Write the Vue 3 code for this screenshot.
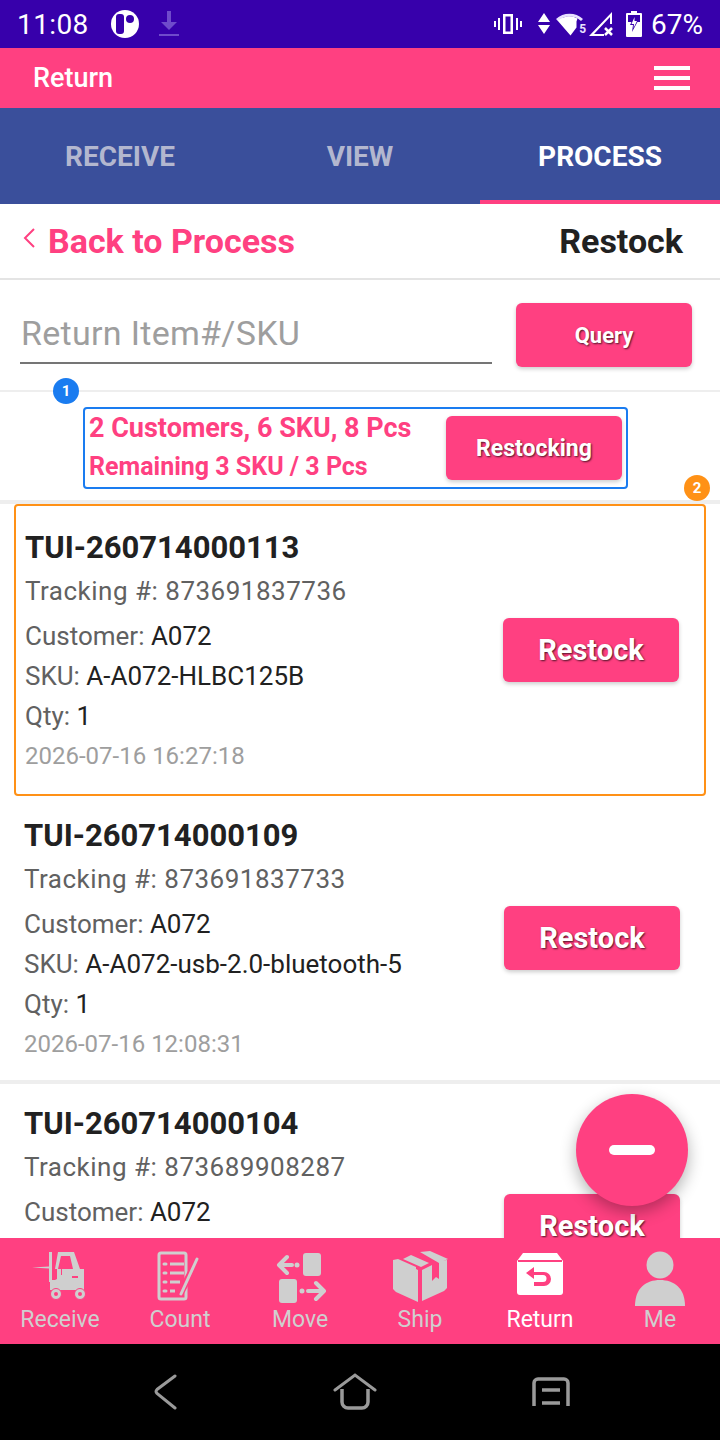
<template>
  <div class="phone">
    <div class="status-bar">
      <span class="time">11:08</span>
      <svg class="st-icon" width="30" height="30" viewBox="0 0 30 30">
        <circle cx="15" cy="15" r="14" fill="#fff" />
        <rect x="6" y="5" width="8" height="20" rx="3" fill="#3700ab" />
        <circle cx="20" cy="10" r="4" fill="#3700ab" />
      </svg>
      <svg class="st-icon dl" width="22" height="28" viewBox="0 0 22 28">
        <path d="M9 1h4v11h6l-8 8-8-8h6zM1 24h20v2H1z" fill="#6f4bcb" />
      </svg>
      <span class="spacer"></span>
      <svg width="28" height="22" viewBox="0 0 28 22">
        <path d="M9 1h10v20H9zM11.500 3.500v15h5v-15zM4 5h2v12H4zM22 5h2v12h-2zM0 8h2v6H0zM26 8h2v6h-2z" fill="#fff" fill-rule="evenodd" />
      </svg>
      <svg class="arrows" width="14" height="22" viewBox="0 0 14 22">
        <path d="M7 0l6 9H1zM1 12h12l-6 9z" fill="#fff" />
      </svg>
      <svg class="wifi" width="30" height="24" viewBox="0 0 30 24">
        <path d="M1 7a20 20 0 0 1 27 0l-2 2a17 17 0 0 0-23 0z" fill="#e8e0ff" />
        <path d="M2.500 8.500a18 18 0 0 1 20 -2l-1 3v6l-6 8z" fill="#fff" />
      </svg>
      <span class="wifi-five">5</span>
      <svg class="signal" width="26" height="26" viewBox="0 0 26 26">
        <path d="M24 1v12h-2V6L6 23h10v2H1z" fill="#fff" />
        <path d="M17 17l7 7M24 17l-7 7" stroke="#fff" stroke-width="2.500" />
      </svg>
      <svg class="battery" width="16" height="26" viewBox="0 0 16 26">
        <path d="M5 0h6v2h4a1 1 0 0 1 1 1v22a1 1 0 0 1-1 1H1a1 1 0 0 1-1-1V3a1 1 0 0 1 1-1h4z" fill="#fff" />
        <path d="M2 4h12v7H2z" fill="#3700ab" />
        <path d="M9 4l-5 10h3l-1 7 6-11H8z" fill="#3700ab" />
        <path d="M8.500 6l-3 7h2.500l-.5 4 3.500-7H8.500z" fill="#fff" />
      </svg>
      <span class="pct">67%</span>
    </div>

    <header class="app-bar">
      <span class="app-title">Return</span>
      <div class="burger"><i></i><i></i><i></i></div>
    </header>

    <nav class="tabs">
      <div v-for="t in tabs" :key="t" class="tab" :class="{ active: t === 'PROCESS' }">{{ t }}</div>
    </nav>

    <main class="content">
      <div class="back-row">
        <svg class="chev" width="14" height="22" viewBox="0 0 14 22">
          <path d="M12 2L3 11l9 9" fill="none" stroke="#ff4081" stroke-width="2" />
        </svg>
        <span class="back-text">Back to Process</span>
        <span class="page-name">Restock</span>
      </div>

      <div class="query-row">
        <div class="query-input">Return Item#/SKU</div>
        <button class="btn query-btn">Query</button>
      </div>

      <div class="summary">
        <div class="summary-box">
          <span class="pin pin-blue">1</span>
          <div class="summary-text">
            <div class="sum-1">2 Customers, 6 SKU, 8 Pcs</div>
            <div class="sum-2">Remaining 3 SKU / 3 Pcs</div>
          </div>
          <button class="btn restocking">Restocking</button>
        </div>
      </div>

      <div class="list">
        <div v-for="(item, i) in items" :key="item.id" class="item" :class="{ marked: i === 0 }">
          <span v-if="i === 0" class="pin pin-orange">2</span>
          <div class="item-info">
            <div class="item-id">{{ item.id }}</div>
            <div class="line track">Tracking #: {{ item.tracking }}</div>
            <div class="line cust"><span>Customer: </span><b>{{ item.customer }}</b></div>
            <div class="line"><span>SKU: </span><b>{{ item.sku }}</b></div>
            <div class="line"><span>Qty: </span><b>{{ item.qty }}</b></div>
            <div class="stamp">{{ item.time }}</div>
          </div>
          <button class="btn restock">Restock</button>
        </div>
      </div>

      <button class="fab"><i></i></button>
    </main>

    <footer class="bottom-nav">
      <div class="nav-item">
        <svg width="60" height="52" viewBox="0 0 60 52" fill="#cfcfcf">
          <path d="M2 17.500l17-1v2z" />
          <rect x="19" y="2" width="3" height="30" />
          <path d="M28 2h16l6 17h4v21H20V30h5l2-1V19h-2zM31 6l-3 13h3v6h1v-6h11l-3-13z" fill-rule="evenodd" />
          <rect x="42" y="26" width="6" height="2" fill="#ff4081" />
          <circle cx="26" cy="44" r="5.500" stroke="#ff4081" stroke-width="1" />
          <circle cx="26" cy="44" r="2" fill="#ff4081" />
          <circle cx="50" cy="44" r="5.500" stroke="#ff4081" stroke-width="1" />
          <circle cx="50" cy="44" r="2" fill="#ff4081" />
        </svg>
        <span>Receive</span>
      </div>
      <div class="nav-item">
        <svg width="60" height="52" viewBox="0 0 60 52">
          <rect x="9" y="3" width="27" height="46" rx="2" fill="none" stroke="#cfcfcf" stroke-width="3" />
          <path d="M20 14h14M20 23h14M20 32h10M20 41h5" stroke="#cfcfcf" stroke-width="3" />
          <path d="M14 14h2M14 23h2M14 32h2M14 41h2" stroke="#cfcfcf" stroke-width="3" stroke-linecap="round" />
          <path d="M30 44L48 9" stroke="#ff4081" stroke-width="7" />
          <path d="M31 44L47 9" stroke="#cfcfcf" stroke-width="3" stroke-linecap="round" />
        </svg>
        <span>Count</span>
      </div>
      <div class="nav-item">
        <svg width="60" height="52" viewBox="0 0 60 52" fill="#cfcfcf">
          <rect x="33" y="3" width="18" height="23" rx="3" />
          <rect x="9" y="29" width="18" height="24" rx="3" />
          <circle cx="27" cy="15" r="2.500" />
          <circle cx="32" cy="41" r="2.500" />
          <path d="M22 15H11M17 7l-8 8 8 8M38 41h14M46 33l8 8-8 8" fill="none" stroke="#cfcfcf" stroke-width="4" stroke-linecap="round" stroke-linejoin="round" />
        </svg>
        <span>Move</span>
      </div>
      <div class="nav-item">
        <svg width="60" height="52" viewBox="0 0 60 52" fill="#cfcfcf">
          <path d="M31 0l10-1 18 8-9 4zM22 3l18 8-8 4L14 7z" transform="translate(-1 2)" />
          <path d="M3 11l5-1 18 8v2l2 1v32l-22-10-3-3zM57 11v28l-3 3-22 10V21l10-5v16l4-4 3 2V12z" transform="translate(0 -1)" />
        </svg>
        <span>Ship</span>
      </div>
      <div class="nav-item current">
        <svg width="60" height="52" viewBox="0 0 60 52">
          <path d="M13 2h34l6 8v31a3 3 0 0 1-3 3H10a3 3 0 0 1-3-3V10z" fill="#fff" transform="translate(0 1)" />
          <rect x="8" y="10" width="44" height="2" fill="#ff4081" />
          <path d="M24 17l-8 6 8 6v-4h9a3 3 0 0 1 0 7h-9v4h10a7 7 0 0 0 0-14h-10z" fill="#ff4081" />
        </svg>
        <span>Return</span>
      </div>
      <div class="nav-item">
        <svg width="60" height="52" viewBox="0 0 60 52" fill="#cfcfcf">
          <circle cx="30" cy="15" r="13.500" />
          <path d="M5 56c0-18 11-26 25-26s25 8 25 26z" />
        </svg>
        <span>Me</span>
      </div>
    </footer>

    <div class="sys-nav">
      <svg width="24" height="36" viewBox="0 0 24 36">
        <path d="M21 2L3 15.500q-2 2 0 4L21 34" fill="none" stroke="#9a9a9a" stroke-width="3" stroke-linecap="round" />
      </svg>
      <svg width="44" height="38" viewBox="0 0 44 38">
        <path d="M2 17L22 2l20 15" fill="none" stroke="#9a9a9a" stroke-width="3" stroke-linecap="round" />
        <path d="M9 16v13a6 6 0 0 0 6 6h14a6 6 0 0 0 6-6V16" fill="none" stroke="#9a9a9a" stroke-width="3.500" />
      </svg>
      <svg width="38" height="32" viewBox="0 0 38 32">
        <path d="M2 30V7a4 4 0 0 1 4-4h26a4 4 0 0 1 4 4v23" fill="none" stroke="#9a9a9a" stroke-width="3.500" />
        <path d="M10 14h18M10 27h18" stroke="#9a9a9a" stroke-width="3.500" />
      </svg>
    </div>
  </div>
</template>

<script setup>
const tabs = ['RECEIVE', 'VIEW', 'PROCESS']

const items = [
  { id: 'TUI-260714000113', tracking: '873691837736', customer: 'A072', sku: 'A-A072-HLBC125B', qty: 1, time: '2026-07-16 16:27:18' },
  { id: 'TUI-260714000109', tracking: '873691837733', customer: 'A072', sku: 'A-A072-usb-2.0-bluetooth-5', qty: 1, time: '2026-07-16 12:08:31' },
  { id: 'TUI-260714000104', tracking: '873689908287', customer: 'A072', sku: 'A-A072-HLBC125B', qty: 1, time: '2026-07-16 10:12:40' },
]
</script>

<style>
html, body {
  margin: 0;
  background: #fff;
}
</style>

<style scoped>
.phone {
  width: 720px;
  height: 1440px;
  display: flex;
  flex-direction: column;
  overflow: hidden;
  font-family: Roboto, "Liberation Sans", sans-serif;
  color: #212121;
}

.status-bar {
  height: 48px;
  flex: none;
  background: #3700ab;
  color: #fff;
  display: flex;
  align-items: center;
  padding: 0 17px;
  box-sizing: border-box;
}
.time {
  font-size: 28px;
  letter-spacing: 0.4px;
  margin-right: 21px;
}
.st-icon {
  flex: none;
}
.dl {
  margin-left: 18px;
}
.spacer {
  flex: 1;
}
.arrows {
  margin-left: 15px;
}
.wifi {
  margin-left: 4px;
}
.wifi-five {
  font-size: 12px;
  font-weight: 700;
  margin: 10px 0 0 -6px;
  color: #e8e0ff;
}
.signal {
  margin-left: 2px;
}
.battery {
  margin-left: 12px;
}
.pct {
  font-size: 28px;
  margin-left: 9px;
}

.app-bar {
  height: 60px;
  flex: none;
  background: #ff4081;
  color: #fff;
  display: flex;
  align-items: center;
  justify-content: space-between;
  padding: 0 30px 0 33px;
}
.app-title {
  font-size: 27px;
  font-weight: 500;
}
.burger {
  width: 36px;
  display: flex;
  flex-direction: column;
  gap: 6px;
}
.burger i {
  display: block;
  height: 4px;
  background: #fff;
}

.tabs {
  height: 96px;
  flex: none;
  background: #3a4f9b;
  display: flex;
}
.tab {
  flex: 1;
  display: flex;
  align-items: center;
  justify-content: center;
  font-size: 28px;
  font-weight: 700;
  color: #b3b7cf;
  box-sizing: border-box;
  border-bottom: 4px solid transparent;
  padding-top: 4px;
}
.tab.active {
  color: #fff;
  border-bottom-color: #ff4081;
}

.content {
  flex: 1;
  min-height: 0;
  position: relative;
  overflow: hidden;
  background: #fff;
}

.back-row {
  height: 76px;
  box-sizing: border-box;
  border-bottom: 2px solid #e4e4e4;
  display: flex;
  align-items: center;
  padding: 0 37px 0 22px;
}
.chev {
  margin: -6px 12px 0 0;
}
.back-text {
  font-size: 34px;
  font-weight: 700;
  color: #ff4081;
  flex: 1;
}
.page-name {
  font-size: 34px;
  font-weight: 700;
  color: #212121;
}

.query-row {
  height: 112px;
  box-sizing: border-box;
  border-bottom: 2px solid #eeeeee;
  display: flex;
  align-items: flex-start;
  justify-content: space-between;
  padding: 23px 28px 0 20px;
}
.query-input {
  width: 472px;
  height: 61px;
  box-sizing: border-box;
  border-bottom: 2px solid #757575;
  font-size: 34px;
  color: #9e9e9e;
  padding: 10px 0 0 1px;
  line-height: 40px;
  letter-spacing: 0.3px;
}

.btn {
  border: 0;
  border-radius: 6px;
  background: #ff4081;
  color: #fff;
  font-family: inherit;
  font-weight: 700;
  padding: 0;
  text-shadow: 1px 1px 2px rgba(0, 0, 0, 0.7);
  box-shadow: 0 2px 4px rgba(0, 0, 0, 0.2);
}
.query-btn {
  width: 176px;
  height: 64px;
  font-size: 22px;
}

.summary {
  height: 112px;
  box-sizing: border-box;
  border-bottom: 4px solid #eeeeee;
  padding: 15px 0 0 83px;
}
.summary-box {
  position: relative;
  width: 545px;
  height: 82px;
  box-sizing: border-box;
  border: 2px solid #1a7cf0;
  border-radius: 4px;
  display: flex;
  align-items: center;
  justify-content: space-between;
  padding: 0 4px;
}
.summary-text {
  color: #ff4081;
  font-weight: 700;
}
.sum-1 {
  font-size: 27px;
  line-height: 38px;
}
.sum-2 {
  font-size: 25px;
  line-height: 40px;
}
.restocking {
  width: 176px;
  height: 64px;
  font-size: 23px;
}

.pin {
  position: absolute;
  width: 26px;
  height: 26px;
  border-radius: 50%;
  color: #fff;
  font-size: 15px;
  font-weight: 700;
  display: flex;
  align-items: center;
  justify-content: center;
}
.pin-blue {
  background: #1a7cf0;
  left: -32px;
  top: -31px;
}
.pin-orange {
  background: #ff9116;
  right: -6px;
  top: -31px;
}

.item {
  position: relative;
  height: 288px;
  box-sizing: border-box;
  border-bottom: 4px solid #eeeeee;
  display: flex;
  align-items: center;
  justify-content: space-between;
  padding: 0 40px 0 24px;
}
.item.marked {
  margin: 0 14px;
  height: 292px;
  padding: 0 25px 0 9px;
  border: 2px solid #ff9116;
  border-radius: 4px;
}
.item-info {
  display: flex;
  flex-direction: column;
}
.item-id {
  font-size: 31px;
  font-weight: 700;
  line-height: 44px;
  color: #212121;
}
.line {
  font-size: 26px;
  line-height: 40px;
  color: #616161;
}
.track {
  letter-spacing: 0.5px;
  line-height: 42px;
  margin-bottom: 4px;
}
.line b {
  font-weight: 400;
  color: #212121;
}
.stamp {
  font-size: 24px;
  line-height: 36px;
  color: #9e9e9e;
  margin-top: 2px;
}
.restock {
  width: 176px;
  height: 64px;
  font-size: 29px;
  flex: none;
}

.fab {
  position: absolute;
  left: 576px;
  top: 890px;
  width: 112px;
  height: 112px;
  border: 0;
  padding: 0;
  border-radius: 50%;
  background: #ff4081;
  box-shadow: 0 6px 16px rgba(0, 0, 0, 0.3);
  display: flex;
  align-items: center;
  justify-content: center;
}
.fab i {
  display: block;
  width: 46px;
  height: 10px;
  border-radius: 5px;
  background: #fff;
}

.bottom-nav {
  height: 106px;
  flex: none;
  position: relative;
  background: #ff4081;
  display: grid;
  grid-template-columns: repeat(6, 120px);
}
.nav-item {
  display: flex;
  flex-direction: column;
  align-items: center;
  padding-top: 12px;
  color: #cfcfcf;
  font-size: 23px;
  line-height: 28px;
}
.nav-item svg {
  overflow: visible;
  margin-bottom: 4px;
}
.nav-item.current {
  color: #fff;
}

.sys-nav {
  height: 96px;
  flex: none;
  background: #000;
  display: flex;
  align-items: center;
  justify-content: center;
  gap: 155px;
  padding: 0 0 0 4px;
}
</style>
